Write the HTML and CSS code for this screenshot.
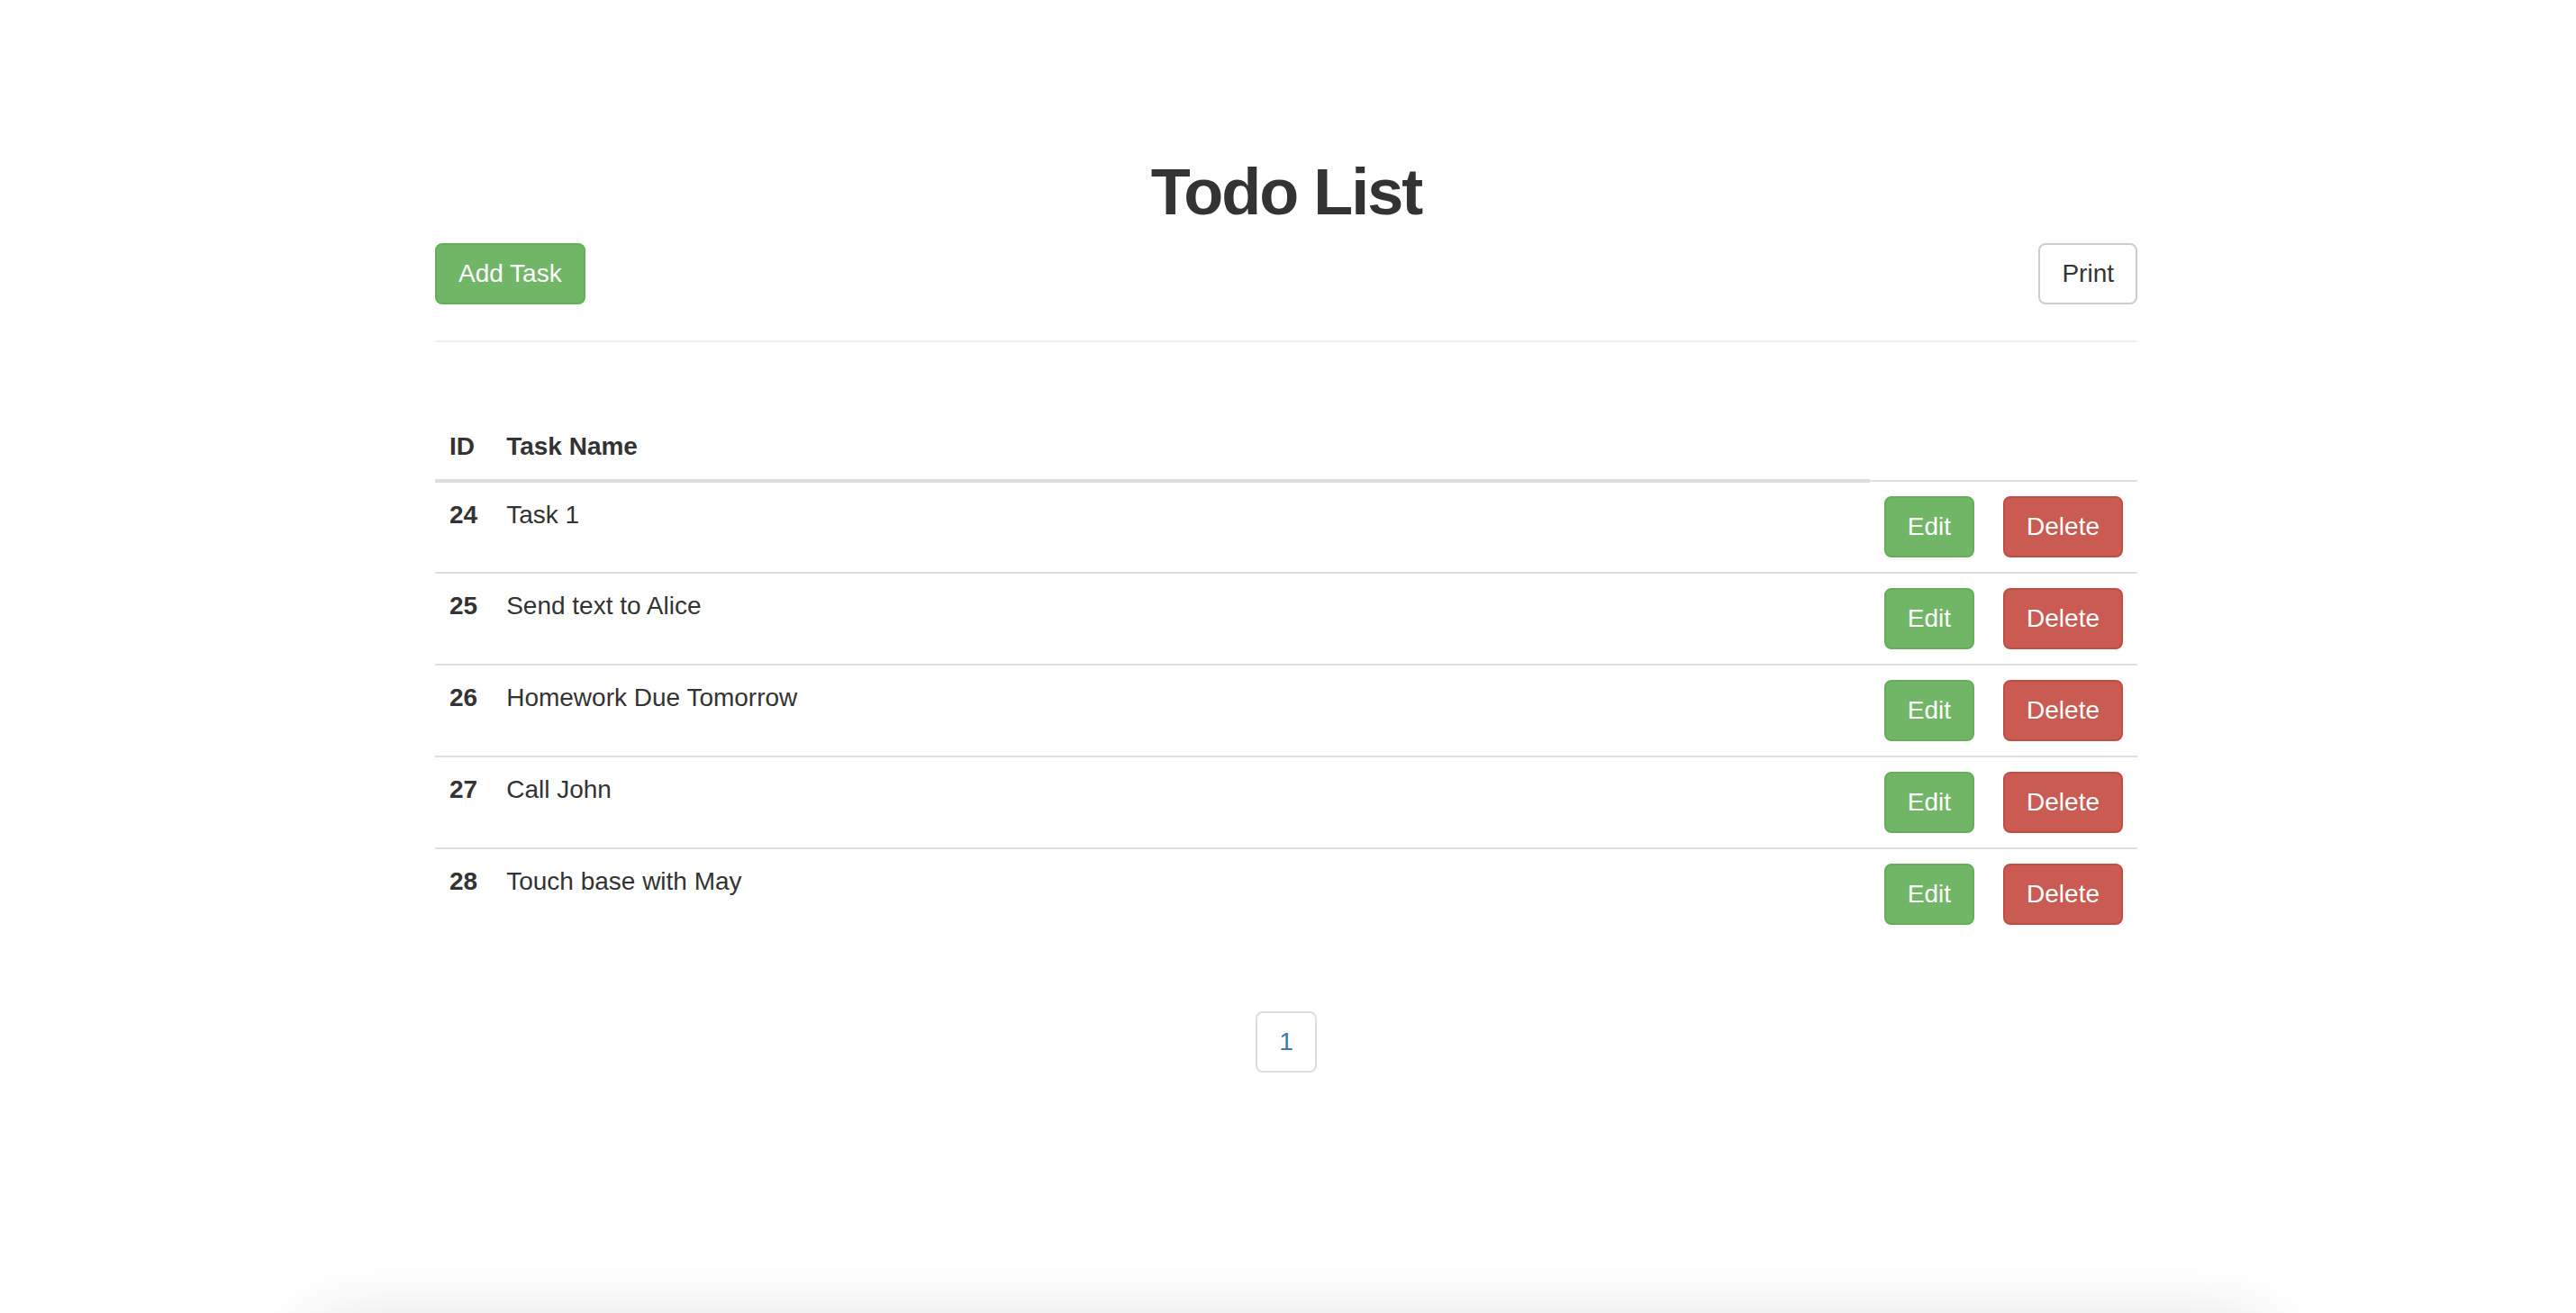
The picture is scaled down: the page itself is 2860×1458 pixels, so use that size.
FILE: index.html
```html
<!DOCTYPE html>
<html lang="en">
<head>
<meta charset="utf-8">
<title>Todo List</title>
<link rel="stylesheet" href="styles.css">
</head>
<body>
<div class="page">
  <div class="container">
    <h1 class="title">Todo List</h1>
    <div class="toolbar">
      <button class="btn btn-success">Add Task</button>
      <button class="btn btn-default">Print</button>
    </div>
    <hr class="divider">
    <table class="table">
      <thead>
        <tr><th class="col-id">ID</th><th>Task Name</th></tr>
      </thead>
      <tbody>
        <tr><td class="col-id">24</td><td>Task 1</td><td class="col-btn"><button class="btn btn-success">Edit</button></td><td class="col-btn"><button class="btn btn-danger">Delete</button></td></tr>
        <tr><td class="col-id">25</td><td>Send text to Alice</td><td class="col-btn"><button class="btn btn-success">Edit</button></td><td class="col-btn"><button class="btn btn-danger">Delete</button></td></tr>
        <tr><td class="col-id">26</td><td>Homework Due Tomorrow</td><td class="col-btn"><button class="btn btn-success">Edit</button></td><td class="col-btn"><button class="btn btn-danger">Delete</button></td></tr>
        <tr><td class="col-id">27</td><td>Call John</td><td class="col-btn"><button class="btn btn-success">Edit</button></td><td class="col-btn"><button class="btn btn-danger">Delete</button></td></tr>
        <tr><td class="col-id">28</td><td>Touch base with May</td><td class="col-btn"><button class="btn btn-success">Edit</button></td><td class="col-btn"><button class="btn btn-danger">Delete</button></td></tr>
      </tbody>
    </table>
    <nav class="pager-wrap">
      <ul class="pagination"><li><a href="#">1</a></li></ul>
    </nav>
  </div>
  <div class="footer-shadow"></div>
</div>
</body>
</html>
```

FILE: styles.css
```css
html, body {
  margin: 0;
  padding: 0;
  overflow: hidden;
  background: #fff;
}
body {
  font-family: "Liberation Sans", Arial, sans-serif;
  font-size: 28px;
  line-height: 40px;
  color: #333;
}
.page {
  padding-top: 173px;
}
.container {
  width: 1890px;
  margin-left: 483px;
}
.title {
  margin: 0 0 17px;
  font-size: 72px;
  line-height: 80px;
  font-weight: bold;
  letter-spacing: -2px;
  text-align: center;
  color: #333;
}
.toolbar {
  display: flex;
  justify-content: space-between;
  align-items: center;
}
.btn {
  display: inline-block;
  margin: 0;
  padding: 12px 24px;
  font-family: inherit;
  font-size: 28px;
  line-height: 40px;
  border: 2px solid transparent;
  border-radius: 8px;
  cursor: pointer;
  vertical-align: middle;
  white-space: nowrap;
}
.btn-success {
  color: #fff;
  background: #71b566;
  border-color: #66ad5a;
}
.btn-danger {
  color: #fff;
  background: #ca5b53;
  border-color: #c24c44;
}
.btn-default {
  color: #333;
  background: #fff;
  border-color: #ccc;
}
.divider {
  margin: 40px 0;
  border: 0;
  border-top: 2px solid #eee;
  height: 0;
}
.table {
  width: 100%;
  border-collapse: collapse;
  border-spacing: 0;
  margin: 80px 0 40px;
}
.table th {
  text-align: left;
  padding: 16px;
  font-weight: bold;
  vertical-align: bottom;
  border-bottom: 4px solid #ddd;
}
.table td {
  padding: 16px;
  vertical-align: top;
  border-top: 2px solid #ddd;
}
.table .col-id {
  width: 1px;
  white-space: nowrap;
  font-weight: bold;
}
.table .col-btn {
  width: 1px;
  white-space: nowrap;
}
.pager-wrap {
  text-align: center;
}
.pagination {
  display: inline-block;
  list-style: none;
  margin: 40px 0;
  padding: 0;
}
.pagination a {
  display: block;
  padding: 12px 24px;
  line-height: 40px;
  color: #337ab7;
  text-decoration: none;
  border: 2px solid #ddd;
  border-radius: 8px;
  background: #fff;
}
.footer-shadow {
  width: 2180px;
  height: 120px;
  margin: 240px 0 0 340px;
  background: #fff;
  box-shadow: 0 0 80px rgba(0, 0, 0, 0.14);
  border-radius: 40px;
}
```
